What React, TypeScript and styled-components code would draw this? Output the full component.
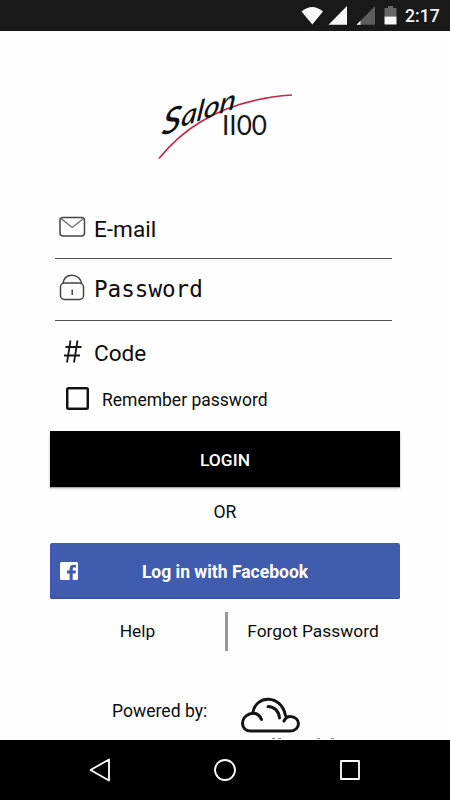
import React from 'react';
import styled, { createGlobalStyle } from 'styled-components';

const GlobalStyle = createGlobalStyle`
  * { box-sizing: border-box; }
  body { margin: 0; background: #fefefe; font-family: Roboto, sans-serif; color: #0c0c0c; }
  button { font-family: inherit; border: 0; padding: 0; }
  svg { display: block; flex: none; }
`;

const Screen = styled.div`
  width: 450px;
  height: 800px;
  display: flex;
  flex-direction: column;
  overflow: hidden;
  background: #fefefe;
`;

const StatusBar = styled.header`
  height: 31px;
  flex: none;
  background: #191919;
  display: flex;
  justify-content: flex-end;
  align-items: center;
  padding-right: 10px;
  color: #f6f6f6;
`;

const Clock = styled.span`
  width: 35px;
  margin-left: 7px;
  font-size: 17.6px;
  line-height: 31px;
  font-weight: 500;
  white-space: nowrap;
  padding-top: 2px;
`;

const Content = styled.main`
  height: 709px;
  flex: none;
  padding: 0 50px;
  display: flex;
  flex-direction: column;
`;

const LogoArea = styled.div`
  height: 169px;
  flex: none;
  padding: 55px 0 0 100px;
`;

const Field = styled.label<{ $height: number; $line?: boolean }>`
  height: ${p => p.$height}px;
  flex: none;
  margin: 0 8px 0 5px;
  padding-left: 4px;
  display: flex;
  align-items: flex-start;
  border-bottom: ${p => (p.$line ? '1px solid #505050' : '0')};
`;

const FieldIcon = styled.span<{ $top: number }>`
  width: 35px;
  flex: none;
  padding-top: ${p => p.$top}px;
`;

const FieldText = styled.span<{ $top: number; $mono?: boolean }>`
  padding-top: ${p => p.$top}px;
  font-family: ${p => (p.$mono ? '"DejaVu Sans Mono", monospace' : 'Roboto, sans-serif')};
  font-size: 22.6px;
  line-height: 28px;
`;

const Remember = styled.label`
  height: 32px;
  flex: none;
  margin-left: 16px;
  display: flex;
  align-items: center;
  gap: 13px;
  font-size: 17.5px;
`;

const RememberText = styled.span`
  padding-top: 1px;
`;

const CheckBox = styled.span`
  width: 23px;
  height: 23px;
  margin-top: -2px;
  border: 2px solid #111;
  box-shadow: inset 0 0 0 .5px #222;
  border-radius: 2.5px;
`;

const LoginButton = styled.button`
  height: 56px;
  flex: none;
  margin-top: 16px;
  background: #000;
  color: #fff;
  font-size: 17.4px;
  font-weight: 500;
  padding-top: 2px;
  box-shadow: 0 1px 1px #aaa, 0 2px 3px #ddd;
`;

const Divider = styled.div`
  height: 56px;
  flex: none;
  padding-top: 15px;
  text-align: center;
  font-size: 17.6px;
  line-height: 21px;
`;

const FacebookButton = styled.button`
  height: 56px;
  flex: none;
  display: flex;
  align-items: center;
  padding: 0 10px;
  background: #405cae;
  border-radius: 2px;
  color: #fff;
  box-shadow: inset 0 -1px #344c9b;
`;

const FacebookLabel = styled.span`
  flex: 1;
  text-align: center;
  font-size: 17.5px;
  font-weight: 700;
  padding: 1px 18px 0 0;
`;

const Links = styled.nav`
  height: 39px;
  flex: none;
  margin-top: 13px;
  display: grid;
  grid-template-columns: 175px 3px 170px;
  align-items: center;
  text-align: center;
  font-size: 17.4px;
  line-height: 20px;
`;

const LinkText = styled.span`
  padding-bottom: 2px;
`;

const Separator = styled.span`
  height: 39px;
  background: #989898;
`;

const Powered = styled.footer`
  margin-top: 46px;
  padding-left: 62px;
  display: flex;
  align-items: flex-start;
  font-size: 17.6px;
`;

const PoweredText = styled.span`
  width: 128px;
  padding-top: 4px;
  line-height: 21px;
`;

const NavBar = styled.footer`
  height: 60px;
  flex: none;
  background: #000;
  display: grid;
  grid-template-columns: repeat(3, 125px);
  justify-content: center;
  align-items: center;
  justify-items: center;
`;

const StatusIcons = () => (
  <svg width="98" height="22" viewBox="300 5 98 22">
    <path d="M301.5 11.5Q312.2 2.5 323 11.5L312.3 24.5Z" fill="#f6f6f6" />
    <path d="M347 6V24.8H328.5Z" fill="#f6f6f6" />
    <path d="M375 6V24.8H356.5Z" fill="#5d5d5d" />
    <path d="M360.5 20.7V24.8H356.5Z" fill="#f6f6f6" />
    <path d="M388 6h5v2h3.5v8.5h-12V8h3.5Z" fill="#666" />
    <path d="M384.5 16.5h12v8h-12Z" fill="#f6f6f6" />
  </svg>
);

const SalonLogo = () => (
  <svg width="155" height="80" viewBox="150 86 155 80">
    <path d="M159 158.500Q205 101 292 95" fill="none" stroke="#c32848" strokeWidth="1.6" />
    <g
      transform="translate(161 136) rotate(-19) skewX(-26)"
      fontFamily="Lato, sans-serif"
      fontStyle="italic"
      fontWeight="500"
      fill="#111"
    >
      <text fontSize="32" textLength="78" lengthAdjust="spacingAndGlyphs">
        S<tspan fontSize="26" dy="-2">alon</tspan>
      </text>
    </g>
    <text
      x="222"
      y="135"
      fontFamily="Lato, sans-serif"
      fontSize="26"
      textLength="45"
      lengthAdjust="spacingAndGlyphs"
      fill="#171717"
    >II00</text>
  </svg>
);

const Envelope = () => (
  <svg width="27" height="22" viewBox="0 0 27 22" fill="none" stroke="#444" strokeWidth="1.5">
    <rect x="1" y="1.5" width="24.5" height="18.5" rx="3" />
    <path d="M2 2.5L13.2 11.5L24.5 2.5" stroke="#666" strokeWidth="1.2" />
  </svg>
);

const Padlock = () => (
  <svg width="27" height="27" viewBox="0 0 27 27" fill="none" stroke="#444" strokeWidth="1.5">
    <rect x="1.5" y="9" width="23" height="16.5" rx="4" />
    <path d="M4 10C4.500 4.500 8 1.200 13 1.200S22 4.500 22.500 10" />
    <path d="M13.200 15.500V21" />
  </svg>
);

const Hash = () => (
  <svg width="27" height="24" viewBox="0 0 27 24" fill="none" stroke="#151515" strokeWidth="1.8">
    <path d="M11.500 0.500L8 22.500M18.500 0.500L15 22.500M6.500 7H22.500M5 15.500H21" />
  </svg>
);

const FacebookMark = () => (
  <svg width="18" height="18" viewBox="0 0 18 18">
    <rect width="18" height="18" rx="1.5" fill="#fff" />
    <path d="M9.6 18V11.4H7V8.5H9.6V7C9.6 4 11.3 2.7 13.6 2.7H16V5.6H14.2C13 5.6 12.7 6.2 12.7 7.2V8.5H16L15.5 11.4H12.7V18Z" fill="#405cae" />
  </svg>
);

const Cloud = () => (
  <svg width="100" height="42" viewBox="240 697 100 42" fill="none" stroke="#141414" strokeWidth="3" strokeLinecap="round">
    <path d="M261.500 719.500C259 713.500 254 712 249.500 714C240 717.500 240 731 251 731H290C301 731 301.500 716.500 290 716.500C287.500 716.500 285.500 718 284 721M253 712C256 695 281 694 285.500 715.500M268 706.500C274 706.500 279 711 279.500 718" />
    <path d="M272 738.500h3M278 738.500h3M317 738.500h3M331 738.500h3" stroke="#888" strokeWidth="1" strokeLinecap="butt" />
  </svg>
);

const App = () => (
  <>
    <GlobalStyle />
    <Screen>
      <StatusBar>
        <StatusIcons />
        <Clock>2:17</Clock>
      </StatusBar>
      <Content>
        <LogoArea><SalonLogo /></LogoArea>
        <Field $height={59} $line>
          <FieldIcon $top={16}><Envelope /></FieldIcon>
          <FieldText $top={16}>E-mail</FieldText>
        </Field>
        <Field $height={62} $line>
          <FieldIcon $top={15}><Padlock /></FieldIcon>
          <FieldText $top={16} $mono>Password</FieldText>
        </Field>
        <Field $height={62}>
          <FieldIcon $top={19}><Hash /></FieldIcon>
          <FieldText $top={19}>Code</FieldText>
        </Field>
        <Remember><CheckBox /><RememberText>Remember password</RememberText></Remember>
        <LoginButton>LOGIN</LoginButton>
        <Divider>OR</Divider>
        <FacebookButton>
          <FacebookMark />
          <FacebookLabel>Log in with Facebook</FacebookLabel>
        </FacebookButton>
        <Links>
          <LinkText>Help</LinkText>
          <Separator />
          <LinkText>Forgot Password</LinkText>
        </Links>
        <Powered>
          <PoweredText>Powered by:</PoweredText>
          <Cloud />
        </Powered>
      </Content>
      <NavBar>
        <svg width="22" height="24" viewBox="0 0 22 24" fill="none" stroke="#fff" strokeWidth="1.8" strokeLinejoin="round">
          <path d="M20 1.500V22.500L1.500 12Z" />
        </svg>
        <svg width="24" height="24" viewBox="0 0 24 24" fill="none" stroke="#fff" strokeWidth="1.8">
          <circle cx="12" cy="12" r="10" />
        </svg>
        <svg width="22" height="22" viewBox="0 0 22 22" fill="none" stroke="#fff" strokeWidth="1.8" strokeLinejoin="round">
          <rect x="2" y="2" width="18" height="18" />
        </svg>
      </NavBar>
    </Screen>
  </>
);

export default App;
